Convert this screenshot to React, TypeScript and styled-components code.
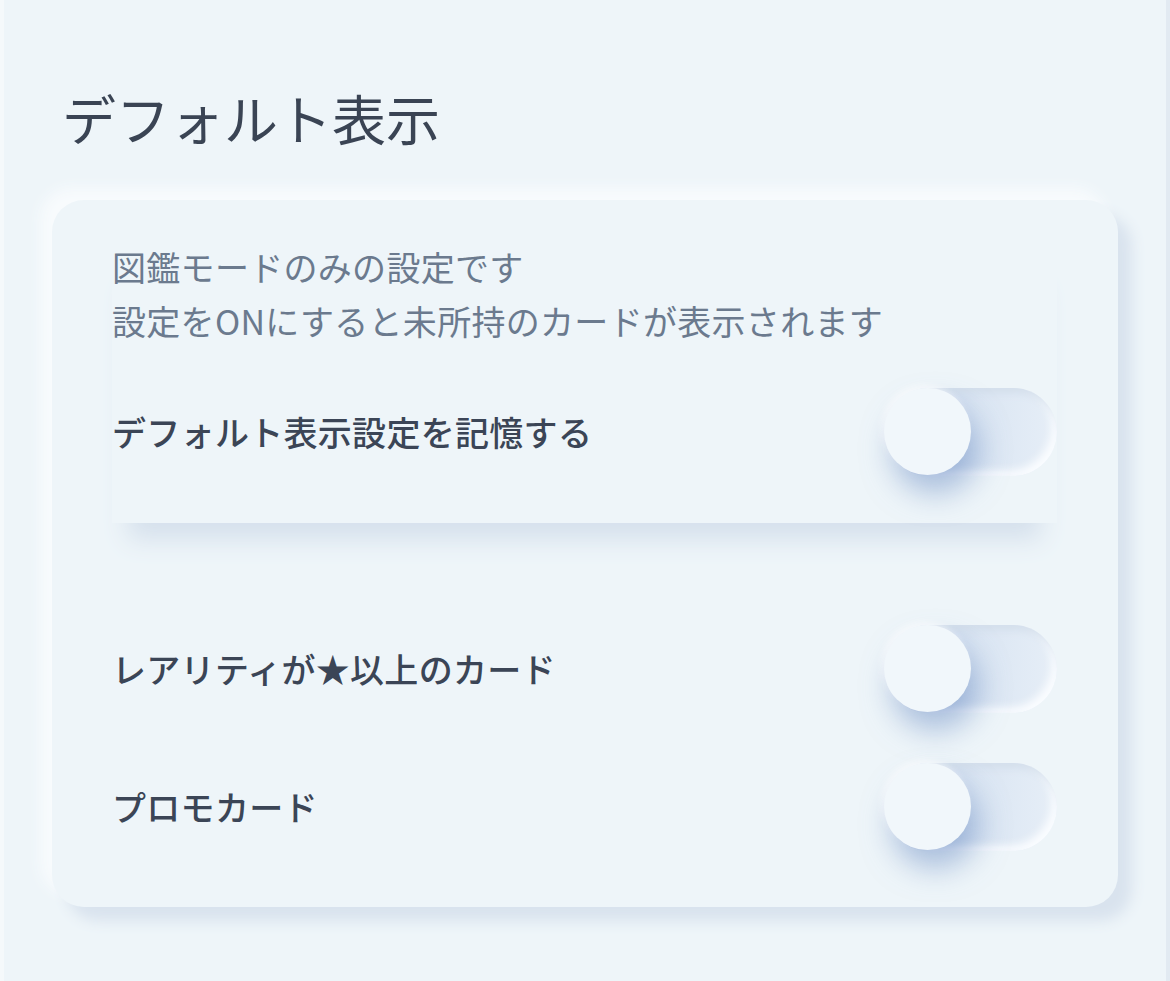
import React, { useState } from "react";
import styled, { createGlobalStyle } from "styled-components";

const GlobalStyle = createGlobalStyle`
  html, body {
    margin: 0;
    padding: 0;
    background: #eef5f9;
  }
  body {
    font-family: "Noto Sans CJK JP", "Noto Sans", sans-serif;
    -webkit-font-smoothing: antialiased;
  }
`;

const Page = styled.div`
  box-sizing: border-box;
  min-height: 100vh;
  background: #eef5f9;
  border-left: 4px solid #f5f9fb;
  border-right: 4px solid #e2eaf2;
  padding: 88px 48px 40px 48px;
`;

const Heading = styled.h1`
  margin: 0 0 52px 10px;
  font-size: 54px;
  line-height: 60px;
  font-weight: 400;
  color: #3a4454;
  letter-spacing: 0;
`;

const Card = styled.section`
  background: #eef5f9;
  border-radius: 32px;
  padding: 40px 61px 56px 60px;
  box-shadow: 14px 14px 14px #d9e3ee, -12px -12px 14px #f8fbfd;
`;

const TopSection = styled.div`
  position: relative;
  background: #eef5f9;
  padding-bottom: 47px;
  box-shadow: 0 32px 24px -16px #d5e0ec;
`;

const Description = styled.p`
  margin: 0 0 40px 0;
  font-size: 34px;
  line-height: 54px;
  font-weight: 400;
  color: #6b7a8e;
  letter-spacing: 0.3px;
`;

const RowList = styled.div`
  display: flex;
  flex-direction: column;
  gap: 50px;
  margin-top: 102px;
`;

const Row = styled.div`
  display: flex;
  align-items: center;
  justify-content: space-between;
  height: 88px;
`;

const Label = styled.span`
  font-size: 34px;
  line-height: 44px;
  font-weight: 500;
  color: #3b4556;
  letter-spacing: 0.3px;
`;

const Track = styled.button<{ $on: boolean }>`
  position: relative;
  width: 172px;
  height: 88px;
  border: none;
  padding: 0;
  border-radius: 44px;
  cursor: pointer;
  background: ${(p) =>
    p.$on
      ? "linear-gradient(90deg, #9fc0ea, #c7dbf4)"
      : "linear-gradient(90deg, #c3d3e9 0%, #dbe6f3 55%, #e6eef7 100%)"};
  box-shadow: inset 5px 5px 8px #d3deeb, inset -5px -5px 8px #fbfdff;
  outline: none;
`;

const Knob = styled.span<{ $on: boolean }>`
  position: absolute;
  top: 0;
  left: ${(p) => (p.$on ? "85px" : "-1px")};
  width: 87px;
  height: 87px;
  border-radius: 50%;
  background: #f1f7fb;
  box-shadow: 8px 18px 30px rgba(112, 143, 196, 0.55),
    -3px -3px 6px rgba(255, 255, 255, 0.7);
  transition: left 0.2s ease;
`;

function Toggle() {
  const [on, setOn] = useState(false);
  return (
    <Track $on={on} onClick={() => setOn(!on)} aria-pressed={on}>
      <Knob $on={on} />
    </Track>
  );
}

export default function App() {
  return (
    <>
      <GlobalStyle />
      <Page>
        <Heading>デフォルト表示</Heading>
        <Card>
          <TopSection>
            <Description>
              図鑑モードのみの設定です
              <br />
              設定をONにすると未所持のカードが表示されます
            </Description>
            <Row>
              <Label>デフォルト表示設定を記憶する</Label>
              <Toggle />
            </Row>
          </TopSection>
          <RowList>
            <Row>
              <Label>レアリティが★以上のカード</Label>
              <Toggle />
            </Row>
            <Row>
              <Label>プロモカード</Label>
              <Toggle />
            </Row>
          </RowList>
        </Card>
      </Page>
    </>
  );
}
